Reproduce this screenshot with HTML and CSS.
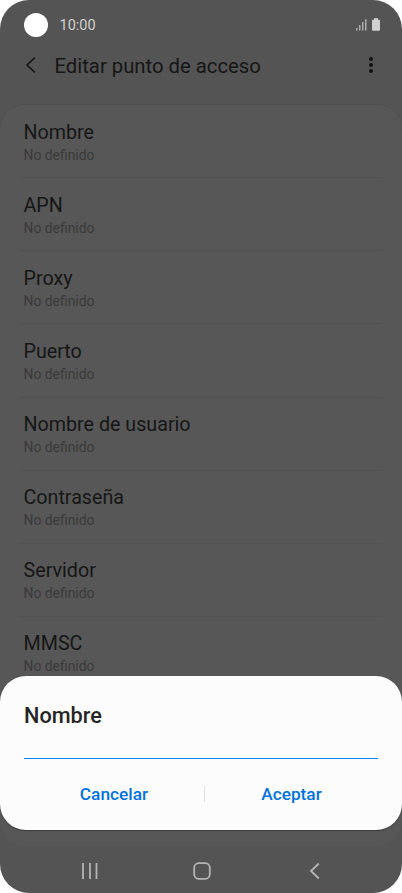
FILE: index.html
```html
<!DOCTYPE html>
<html lang="es">
<head>
  <meta charset="UTF-8" />
  <meta name="viewport" content="width=device-width, initial-scale=1.0" />
  <title>Editar punto de acceso</title>
  <link rel="stylesheet" href="styles.css">
</head>
<body>
  <div class="phone">
    <div class="status-bar">
      <span class="camera"></span>
      <span class="time">10:00</span>
      <svg class="signal" width="11" height="12" viewBox="0 0 11 12" fill="#c4c4c4">
        <rect x="0.2" y="9" width="1.2" height="2.5" />
        <rect x="3.2" y="6" width="1.2" height="5.5" />
        <rect x="6.2" y="3" width="1.2" height="8.5" />
        <rect x="9.2" y="0.3" width="1.2" height="11.2" />
      </svg>
      <svg class="battery" width="8" height="13" viewBox="0 0 8 13" fill="#d0d0d0">
        <path d="M2 0.3h4v1.5h1q1 0 1 1v8.9q0 1-1 1H1q-1 0-1-1V2.8q0-1 1-1h1z" />
      </svg>
    </div>

    <header>
      <svg class="back" width="12" height="18" viewBox="0 0 12 18" fill="none" stroke="#161616" stroke-width="1.6">
        <path d="M10.8 1.7L3 9l7.800 7.300" />
      </svg>
      <h1>Editar punto de acceso</h1>
      <svg class="more" width="6" height="18" viewBox="0 0 6 18" fill="#111">
        <circle cx="3" cy="3" r="2" />
        <circle cx="3" cy="9" r="2" />
        <circle cx="3" cy="15" r="2" />
      </svg>
    </header>

    <div class="settings">
      <div class="item"><div class="item-title">Nombre</div><div class="item-value">No definido</div></div>
      <div class="item"><div class="item-title">APN</div><div class="item-value">No definido</div></div>
      <div class="item"><div class="item-title">Proxy</div><div class="item-value">No definido</div></div>
      <div class="item"><div class="item-title">Puerto</div><div class="item-value">No definido</div></div>
      <div class="item"><div class="item-title">Nombre de usuario</div><div class="item-value">No definido</div></div>
      <div class="item"><div class="item-title">Contraseña</div><div class="item-value">No definido</div></div>
      <div class="item"><div class="item-title">Servidor</div><div class="item-value">No definido</div></div>
      <div class="item"><div class="item-title">MMSC</div><div class="item-value">No definido</div></div>
    </div>

    <nav>
      <svg width="18" height="18" viewBox="0 0 18 18" stroke="#b4b4b4" stroke-width="1.8">
        <path d="M2 1v16M9 1v16M15.5 1v16" />
      </svg>
      <svg width="18" height="18" viewBox="0 0 18 18" fill="none" stroke="#b4b4b4" stroke-width="1.8">
        <rect x="1.2" y="1.2" width="15.6" height="15.6" rx="4.5" />
      </svg>
      <svg width="18" height="18" viewBox="0 0 18 18" fill="none" stroke="#b4b4b4" stroke-width="1.8">
        <path d="M13.8 1.5L6 9l7.8 7.5" />
      </svg>
    </nav>

    <div class="dialog">
      <h2>Nombre</h2>
      <div class="field"></div>
      <div class="actions">
        <button>Cancelar</button>
        <span class="separator"></span>
        <button>Aceptar</button>
      </div>
    </div>
  </div>
</body>
</html>
```
FILE: styles.css
```css
body {
  margin: 0;
  background-color: #fff;
  font-family: Roboto, sans-serif;
}

.phone {
  position: relative;
  width: 402px;
  height: 893px;
  display: flex;
  flex-direction: column;
  overflow: hidden;
  background-color: #545454;
  border-radius: 29px;
}

.status-bar {
  display: flex;
  align-items: center;
  height: 49px;
  padding: 0 22px 0 24px;
}

.camera {
  width: 24px;
  height: 24px;
  border-radius: 50%;
  background-color: #fff;
}

.time {
  margin-left: 11.5px;
  padding-top: 2px;
  font-size: 14.5px;
  color: #d0d0d0;
}

.signal {
  margin-left: auto;
}

.battery {
  margin-left: 5px;
}

header {
  display: flex;
  align-items: center;
  height: 32px;
  padding: 0 28px 0 24px;
  margin-bottom: 23px;
}

h1 {
  margin: 0 0 0 18.5px;
  padding-top: 2px;
  font-size: 20.3px;
  font-weight: 400;
  color: #161616;
}

.more {
  margin-left: auto;
}

.settings {
  height: 742px;
  box-sizing: border-box;
  flex-shrink: 0;
  overflow: hidden;
  background-color: #575757;
  border-top: 1px solid #505050;
  border-radius: 25px;
}

.item {
  height: 73.15px;
  box-sizing: border-box;
  margin: 0 20px;
  padding: 14.5px 3.5px 0;
  border-bottom: 1px solid #525252;
}

.item:last-child {
  border-bottom: 0;
}

.item-title {
  font-size: 19.7px;
  line-height: 25px;
  color: #161616;
}

.item-value {
  font-size: 13.9px;
  line-height: 20px;
  color: #3a3a3a;
}

nav {
  display: flex;
  justify-content: space-between;
  align-items: center;
  height: 47px;
  padding: 3px 79px 0 81px;
  box-sizing: border-box;
}

.dialog {
  position: absolute;
  top: 676px;
  left: 0;
  width: 402px;
  height: 154px;
  box-sizing: border-box;
  padding: 26px 24px 0;
  background-color: #fcfcfc;
  border-radius: 26px;
  box-shadow: 0 1px 1px rgba(0, 0, 0, 0.3);
}

h2 {
  margin: 0;
  font-size: 21.7px;
  line-height: 27px;
  font-weight: 500;
  color: #252525;
}

.field {
  height: 29px;
  border-bottom: 1px solid #0381fe;
}

.actions {
  display: flex;
  align-items: center;
  height: 69px;
}

.actions button {
  width: 180px;
  padding: 0;
  border: 0;
  background: none;
  font-family: Roboto, sans-serif;
  font-size: 17.3px;
  font-weight: 500;
  color: #0072de;
}

.actions button:last-child {
  width: 173px;
}

.separator {
  width: 1px;
  height: 16px;
  background-color: #e2e2e2;
}
```
